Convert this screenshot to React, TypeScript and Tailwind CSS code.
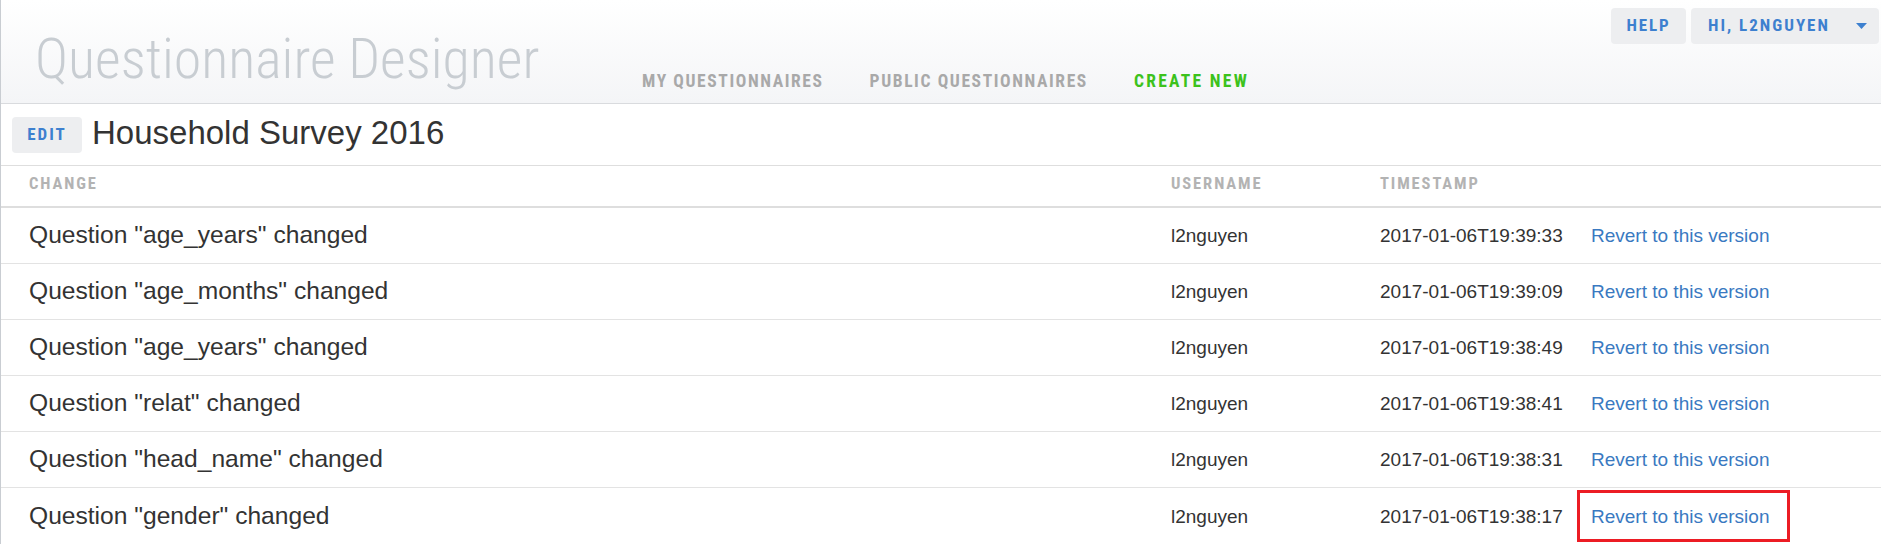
import React from "react";

const rows = [
  { change: 'Question "age_years" changed', user: "l2nguyen", ts: "2017-01-06T19:39:33" },
  { change: 'Question "age_months" changed', user: "l2nguyen", ts: "2017-01-06T19:39:09" },
  { change: 'Question "age_years" changed', user: "l2nguyen", ts: "2017-01-06T19:38:49" },
  { change: 'Question "relat" changed', user: "l2nguyen", ts: "2017-01-06T19:38:41" },
  { change: 'Question "head_name" changed', user: "l2nguyen", ts: "2017-01-06T19:38:31" },
  { change: 'Question "gender" changed', user: "l2nguyen", ts: "2017-01-06T19:38:17" },
];

const narrow = "font-['Roboto_Condensed','Liberation_Sans',sans-serif] font-bold uppercase";

export default function App() {
  return (
    <div className="w-[1881px] h-[544px] overflow-hidden bg-white border-l border-[#c9cdd2] font-['Liberation_Sans',Arial,sans-serif] text-[#333]">
      <header className="h-[104px] flex border-b border-[#d9dbde] bg-gradient-to-b from-white to-[#f4f5f7]">
        <div className="w-[641px] shrink-0 pl-[34px] pt-[31px]">
          <div className="font-['Roboto_Condensed','Roboto',sans-serif] font-light text-[56px] leading-none text-[#c8cdd2] whitespace-nowrap">
            Questionnaire Designer
          </div>
        </div>
        <nav className={`flex items-end gap-[46px] pb-[13px] text-[17.5px] tracking-[1.6px] leading-none ${narrow}`}>
          <span className="text-[#a9a9a9]">My Questionnaires</span>
          <span className="text-[#a9a9a9]">Public Questionnaires</span>
          <span className="text-[#3cc21c] tracking-[2.3px]">Create New</span>
        </nav>
        <div className="ml-auto mr-[2px] mt-[8px] flex gap-[5px] h-[36px]">
          <button className={`w-[75px] h-[36px] rounded-[4px] bg-[#edeef0] text-[#3d80cf] text-[17px] tracking-[1.8px] ${narrow}`}>
            Help
          </button>
          <button className={`w-[188px] h-[36px] rounded-[4px] bg-[#edeef0] text-[#3d80cf] text-[17px] tracking-[2px] flex items-center pl-[17px] pr-[12px] ${narrow}`}>
            <span>Hi, l2nguyen</span>
            <svg className="ml-auto" width="11" height="6" viewBox="0 0 11 6">
              <polygon points="0,0 11,0 5.5,6" fill="#3d80cf" />
            </svg>
          </button>
        </div>
      </header>

      <div className="h-[61px] flex items-center pl-[11px]">
        <button className={`w-[70px] h-[36px] rounded-[4px] bg-[#edeef0] text-[#3d80cf] text-[17px] tracking-[2px] ${narrow}`}>
          Edit
        </button>
        <h1 className="ml-[10px] mb-[4px] text-[33px] leading-none text-[#333]">Household Survey 2016</h1>
      </div>

      <div className="grid grid-cols-[1142px_209px_211px_1fr] pl-[28px] h-[43px] items-center border-t border-b-2 border-[#dedede]">
        <span className={`mb-[4px] text-[16.5px] tracking-[1.9px] text-[#b3b3b3] ${narrow}`}>Change</span>
        <span className={`mb-[4px] text-[16.5px] tracking-[1.9px] text-[#b3b3b3] ${narrow}`}>Username</span>
        <span className={`mb-[4px] text-[16.5px] tracking-[1.9px] text-[#b3b3b3] ${narrow}`}>Timestamp</span>
        <span />
      </div>

      {rows.map((r, i) => (
        <div
          key={i}
          className={`grid grid-cols-[1142px_209px_211px_1fr] pl-[28px] h-[56px] items-center ${i < rows.length - 1 ? "border-b border-[#e3e3e3]" : ""}`}
        >
          <span className="text-[24.6px] leading-none">{r.change}</span>
          <span className="text-[19px] leading-none">{r.user}</span>
          <span className="text-[19px] leading-none">{r.ts}</span>
          <span className="relative h-full flex items-center">
            <a href="#" className="text-[19px] leading-none text-[#3a79c1]">Revert to this version</a>
            {i === rows.length - 1 && (
              <span className="absolute left-[-14px] top-[2px] w-[213px] h-[52px] border-[3px] border-[#ec1c24]" />
            )}
          </span>
        </div>
      ))}
    </div>
  );
}
